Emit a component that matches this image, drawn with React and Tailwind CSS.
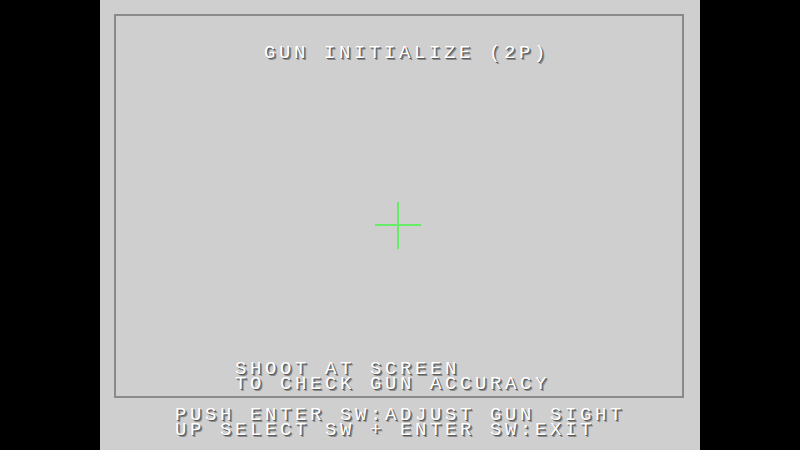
export default function App() {
  const text = "font-['Liberation_Mono',monospace] text-[19px] leading-[15px] tracking-[3.6px] text-white whitespace-pre [text-shadow:1px_1px_0_#5a5a5a,2px_2px_0_#8a8a8a]"

  return (
    <div className="flex h-[450px] w-[800px] bg-black">
      <div className="ml-[100px] flex h-full w-[600px] flex-col bg-[#cfcfcf] pl-[14px] pt-[14px]">
        <div className="flex h-[384px] w-[570px] flex-col border-2 border-[#8a8a8a]">
          <div className={`${text} ml-[148px] mt-[30px]`}>GUN INITIALIZE (2P)</div>

          <svg className="ml-[259px] mt-[141px]" width="48" height="48" viewBox="0 0 48 48">
            <rect x="0" y="22" width="46" height="2" fill="#66ec66" />
            <rect x="22" y="0" width="2" height="47" fill="#66ec66" />
          </svg>

          <div className={`${text} ml-[119px] mt-[112px]`}>
            <div>SHOOT AT SCREEN</div>
            <div>TO CHECK GUN ACCURACY</div>
          </div>
        </div>

        <div className={`${text} ml-[61px] mt-[10px]`}>
          <div>PUSH ENTER SW:ADJUST GUN SIGHT</div>
          <div>UP SELECT SW + ENTER SW:EXIT</div>
        </div>
      </div>
    </div>
  )
}
